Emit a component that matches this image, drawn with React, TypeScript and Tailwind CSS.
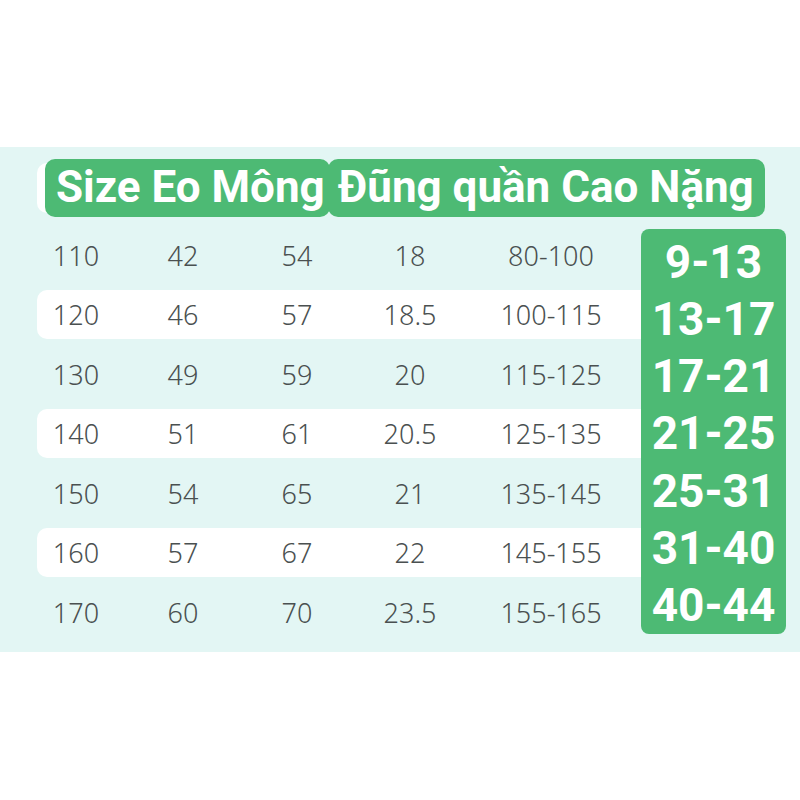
const rows = [
  ["110", "42", "54", "18", "80-100"],
  ["120", "46", "57", "18.5", "100-115"],
  ["130", "49", "59", "20", "115-125"],
  ["140", "51", "61", "20.5", "125-135"],
  ["150", "54", "65", "21", "135-145"],
  ["160", "57", "67", "22", "145-155"],
  ["170", "60", "70", "23.5", "155-165"],
];

const weights = ["9-13", "13-17", "17-21", "21-25", "25-31", "31-40", "40-44"];

export default function App() {
  return (
    <div className="w-[800px] h-[800px] bg-white pt-[147px]">
      <div className="h-[505px] bg-[#e3f6f4] pt-[12px]">
        {/* Header */}
        <div
          className="flex items-center h-[58px] pl-[37px] text-white font-bold text-[44px] leading-none"
          style={{ fontFamily: "Roboto, 'Noto Sans', sans-serif" }}
        >
          <div className="w-[14px] h-[50px] bg-white rounded-l-[10px]" />
          <div className="-ml-[6px] w-[285px] h-[58px] bg-[#4dba74] rounded-[10px] flex items-center pl-[11px] pb-[2px]">
            Size Eo Mông
          </div>
          <div className="-ml-[2px] w-[437px] h-[58px] bg-[#4dba74] rounded-[10px] flex items-center pl-[10px] pb-[2px]">
            Đũng quần Cao Nặng
          </div>
        </div>

        {/* Body */}
        <div className="flex mt-[12px] pl-[37px]">
          <div
            className="w-[604px] pt-[1.5px] text-[27px] font-light text-[#4a5050]"
            style={{ fontFamily: "'Noto Sans', sans-serif" }}
          >
            {rows.map((r, i) => (
              <div
                key={r[0]}
                className={
                  "h-[49px] mb-[10.5px] grid grid-cols-[78px_136px_92px_134px_148px] items-center rounded-l-[10px] " +
                  (i % 2 === 1 ? "bg-white" : "")
                }
              >
                {r.map((c, j) => (
                  <div key={j} className="text-center leading-none">
                    {c}
                  </div>
                ))}
              </div>
            ))}
          </div>
          <div
            className="w-[145px] h-[405px] bg-[#4dba74] rounded-[8px] pt-[4px] flex flex-col text-white font-bold text-[46px] leading-none"
            style={{ fontFamily: "Roboto, 'Noto Sans', sans-serif" }}
          >
            {weights.map((w) => (
              <div key={w} className="h-[57.5px] flex items-center justify-center">
                {w}
              </div>
            ))}
          </div>
        </div>
      </div>
    </div>
  );
}
